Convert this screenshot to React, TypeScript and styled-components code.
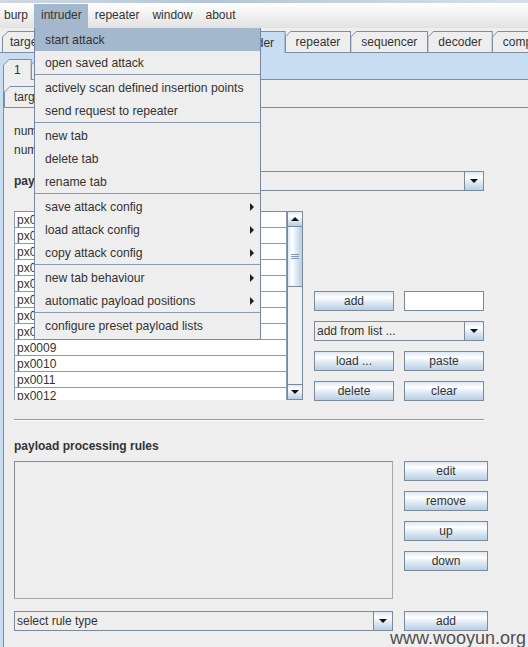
import React from "react";
import styled, { createGlobalStyle } from "styled-components";

const GlobalStyle = createGlobalStyle`
  html, body { margin: 0; padding: 0; background: #eeeeee; overflow: hidden; }
  body {
    font-family: "Liberation Sans", Arial, sans-serif;
    font-size: 12px;
    color: #333333;
  }
  * { box-sizing: border-box; }
`;

const BORDER = "#7d8da3";
const CONTROL = "#7a8a99";
const BLUE = "#c8ddf2";
const HILITE = "#a3b8cc";
const BTN_GRAD = "linear-gradient(to bottom, #dde8f3 0%, #ffffff 30%, #dde8f3 60%, #b8cfe5 100%)";

const Window = styled.div`
  position: relative;
  width: 528px;
  height: 647px;
  overflow: hidden;
  background: #eeeeee;
`;

const TitleStrip = styled.div`
  height: 3px;
  background: linear-gradient(to right, #cfd9e4, #b4c6d8 40%, #d7e0ea);
`;

const MenuBar = styled.div`
  position: relative;
  z-index: 10;
  height: 25px;
  padding-top: 1px;
  display: flex;
  background: linear-gradient(to bottom, #ffffff, #e2e2e2);
`;

const MenuItem = styled.div<{ $active?: boolean; $first?: boolean }>`
  position: relative;
  height: 24px;
  line-height: 23px;
  padding: 0 6px 0 ${(p) => (p.$first ? 4 : 7)}px;
  background: ${(p) => (p.$active ? HILITE : "transparent")};
  white-space: nowrap;
`;

const Dropdown = styled.div`
  position: absolute;
  top: 100%;
  left: 0;
  width: 227px;
  padding-bottom: 2px;
  background: #eeeeee;
  border: 1px solid #7587a2;
  border-top-width: 0;
  line-height: normal;
  font-size: 12.2px;
`;

const DropItem = styled.div<{ $active?: boolean }>`
  height: 23px;
  display: flex;
  align-items: center;
  justify-content: space-between;
  padding: 0 6px 0 10px;
  background: ${(p) => (p.$active ? HILITE : "transparent")};
  white-space: nowrap;
`;

const SubArrow = styled.span`
  width: 0;
  height: 0;
  border-top: 4px solid transparent;
  border-bottom: 4px solid transparent;
  border-left: 4px solid #1e1e1e;
`;

const DropSep = styled.div`
  height: 2px;
  border-top: 1px solid #8a9ab2;
`;

const Gap = styled.div<{ $h: number }>`
  height: ${(p) => p.$h}px;
`;

const TabRow = styled.div<{ $h: number; $pad: number; $bg: string }>`
  display: flex;
  align-items: flex-end;
  height: ${(p) => p.$h}px;
  padding-left: ${(p) => p.$pad}px;
  background: ${(p) => p.$bg};
  border-bottom: 1px solid ${BORDER};
`;

const Tab = styled.div<{ $sel?: boolean; $h: number }>`
  position: relative;
  z-index: ${(p) => (p.$sel ? 2 : 1)};
  flex-shrink: 0;
  height: ${(p) => p.$h + (p.$sel ? 1 : 0)}px;
  margin-bottom: ${(p) => (p.$sel ? -1 : 0)}px;
  margin-left: -1px;
  padding: 1px 1px 0 1px;
  background: ${BORDER};
  clip-path: polygon(6px 0, 100% 0, 100% 100%, 0 100%, 0 6px);
  &:first-child { margin-left: 0; }
`;

const TabFace = styled.div<{ $bg: string; $px: number; $pl?: number }>`
  height: 100%;
  display: flex;
  align-items: center;
  padding: 0 ${(p) => p.$px}px 0 ${(p) => p.$pl ?? p.$px}px;
  background: ${(p) => p.$bg};
  clip-path: polygon(5px 0, 100% 0, 100% 100%, 0 100%, 0 5px);
  white-space: nowrap;
`;

const MainPanel = styled.div`
  background: ${BLUE};
  padding-left: 3px;
  height: 600px;
`;

const SubContent = styled.div`
  background: #eeeeee;
  border-left: 1px solid ${BORDER};
  height: 600px;
`;

const PayloadPanel = styled.div`
  padding: 14px 0 0 10px;
`;

const InfoLine = styled.div`
  height: 19px;
  line-height: 19px;
  white-space: nowrap;
`;

const SetRow = styled.div`
  display: flex;
  align-items: center;
  width: 470px;
  height: 20px;
  margin-top: 11px;
`;

const BoldLabel = styled.div<{ $w?: number }>`
  font-weight: bold;
  white-space: nowrap;
  ${(p) => (p.$w ? `width: ${p.$w}px; flex-shrink: 0;` : "")}
`;

const Combo = styled.div<{ $w?: number }>`
  display: flex;
  height: 20px;
  ${(p) => (p.$w ? `width: ${p.$w}px; flex-shrink: 0;` : "flex: 1;")}
  border: 1px solid ${CONTROL};
  background: #eeeeee;
`;

const ComboText = styled.div`
  flex: 1;
  padding-left: 2px;
  line-height: 18px;
  white-space: nowrap;
  overflow: hidden;
`;

const ComboArrow = styled.div`
  width: 19px;
  border-left: 1px solid ${CONTROL};
  background: ${BTN_GRAD};
  display: flex;
  align-items: center;
  justify-content: center;
`;

const DownTri = styled.span`
  width: 0;
  height: 0;
  border-left: 4px solid transparent;
  border-right: 4px solid transparent;
  border-top: 4px solid #111;
`;

const UpTri = styled.span`
  width: 0;
  height: 0;
  border-left: 4px solid transparent;
  border-right: 4px solid transparent;
  border-bottom: 4px solid #111;
`;

const ListSection = styled.div`
  display: flex;
  align-items: flex-end;
  gap: 11px;
  margin-top: 20px;
`;

const ListBox = styled.div`
  display: flex;
  width: 289px;
  height: 189px;
`;

const Rows = styled.div`
  flex: 1;
  overflow: hidden;
  border-top: 1px solid ${BORDER};
  background: #ffffff;
`;

const Row = styled.div`
  height: 16px;
  line-height: 16px;
  padding-left: 2px;
  background: #ffffff;
  border: 1px solid #8a9ab0;
  border-top: none;
`;

const ScrollBar = styled.div`
  width: 16px;
  display: flex;
  flex-direction: column;
  background: #f2f2f2;
  border: 1px solid ${CONTROL};
`;

const ScrollBtn = styled.div`
  height: 15px;
  flex-shrink: 0;
  display: flex;
  align-items: center;
  justify-content: center;
  background: ${BTN_GRAD};
  border-bottom: 1px solid ${CONTROL};
  &:last-child {
    border-bottom: none;
    border-top: 1px solid ${CONTROL};
  }
`;

const Thumb = styled.div`
  height: 60px;
  flex-shrink: 0;
  display: flex;
  align-items: center;
  justify-content: center;
  background: linear-gradient(to right, #dde8f3 0%, #ffffff 30%, #dde8f3 60%, #b8cfe5 100%);
  border-bottom: 1px solid ${CONTROL};
`;

const Grip = styled.div`
  width: 8px;
  height: 5px;
  background: repeating-linear-gradient(to bottom, #7f98b8 0 1px, transparent 1px 2px);
`;

const Track = styled.div`
  flex: 1;
`;

const ButtonGrid = styled.div`
  display: grid;
  grid-template-columns: 80px 80px;
  grid-auto-rows: 20px;
  gap: 10px;
  margin-bottom: -1px;
`;

const Button = styled.div<{ $w?: number }>`
  height: 20px;
  ${(p) => (p.$w ? `width: ${p.$w}px;` : "")}
  border: 1px solid ${CONTROL};
  background: ${BTN_GRAD};
  text-align: center;
  line-height: 18px;
  white-space: nowrap;
`;

const TextField = styled.div`
  height: 20px;
  border: 1px solid ${CONTROL};
  background: #ffffff;
`;

const WideCell = styled.div`
  grid-column: 1 / span 2;
  display: flex;
`;

const Separator = styled.div`
  width: 470px;
  margin-top: 19px;
  height: 2px;
  border-top: 1px solid #8a9aae;
  background: #ffffff;
`;

const SectionTitle = styled(BoldLabel)`
  margin-top: 17px;
  height: 16px;
  line-height: 16px;
`;

const RulesSection = styled.div`
  display: flex;
  gap: 11px;
  margin-top: 7px;
`;

const RulesBox = styled.div`
  width: 379px;
  height: 138px;
  border: 1px solid #8c8c8c;
  border-right-color: #a8a8a8;
  border-bottom-color: #a8a8a8;
  background: #eeeeee;
`;

const RuleButtons = styled.div`
  display: flex;
  flex-direction: column;
  gap: 10px;
  width: 84px;
`;

const BottomRow = styled.div`
  display: flex;
  gap: 11px;
  margin-top: 12px;
`;

const Watermark = styled.div`
  position: absolute;
  right: 2px;
  bottom: -1px;
  font-family: "Liberation Sans", Arial, sans-serif;
  font-size: 18px;
  line-height: 20px;
  color: #505050;
  z-index: 20;
`;

type MenuEntry = { label: string; sub?: boolean; active?: boolean } | "sep";

const menuEntries: MenuEntry[] = [
  { label: "start attack", active: true },
  { label: "open saved attack" },
  "sep",
  { label: "actively scan defined insertion points" },
  { label: "send request to repeater" },
  "sep",
  { label: "new tab" },
  { label: "delete tab" },
  { label: "rename tab" },
  "sep",
  { label: "save attack config", sub: true },
  { label: "load attack config", sub: true },
  { label: "copy attack config", sub: true },
  "sep",
  { label: "new tab behaviour", sub: true },
  { label: "automatic payload positions", sub: true },
  "sep",
  { label: "configure preset payload lists" },
];

const mainTabs = [
  "target", "proxy", "spider", "scanner", "intruder", "repeater",
  "sequencer", "decoder", "comparer", "options", "alerts",
];
const subTabs = ["1", "2", "..."];
const innerTabs = ["target", "positions", "payloads", "options"];

const payloads = Array.from({ length: 12 }, (_, i) => `px${String(i + 1).padStart(4, "0")}`);

export default function App() {
  return (
    <Window>
      <GlobalStyle />
      <TitleStrip />
      <MenuBar>
        <MenuItem $first>burp</MenuItem>
        <MenuItem $active>
          intruder
          <Dropdown>
            {menuEntries.map((e, i) =>
              e === "sep" ? (
                <DropSep key={i} />
              ) : (
                <DropItem key={i} $active={e.active}>
                  <span>{e.label}</span>
                  {e.sub && <SubArrow />}
                </DropItem>
              )
            )}
          </Dropdown>
        </MenuItem>
        <MenuItem>repeater</MenuItem>
        <MenuItem>window</MenuItem>
        <MenuItem>about</MenuItem>
      </MenuBar>
      <Gap $h={3} />
      <TabRow $h={22} $pad={2} $bg="#eeeeee">
        {mainTabs.map((t, i) => (
          <Tab key={t} $h={21} $sel={t === "intruder"}>
            <TabFace
              $px={i < 5 ? 10.5 : 10}
              $pl={i === 0 ? 7 : undefined}
              $bg={t === "intruder" ? BLUE : "#eeeeee"}
            >
              {t}
            </TabFace>
          </Tab>
        ))}
      </TabRow>
      <MainPanel>
        <TabRow $h={27} $pad={0} $bg={BLUE}>
          {subTabs.map((t) => (
            <Tab key={t} $h={20} $sel={t === "1"}>
              <TabFace $px={10} $bg="#eeeeee">{t}</TabFace>
            </Tab>
          ))}
        </TabRow>
        <SubContent>
          <TabRow $h={28} $pad={0} $bg="#eeeeee">
            {innerTabs.map((t) => (
              <Tab key={t} $h={21} $sel={t === "payloads"}>
                <TabFace $px={9} $bg="#eeeeee">{t}</TabFace>
              </Tab>
            ))}
          </TabRow>
          <PayloadPanel>
            <InfoLine>number of payload positions: 1</InfoLine>
            <InfoLine>number of requests: 12</InfoLine>
            <SetRow>
              <BoldLabel $w={90}>payload set</BoldLabel>
              <Combo>
                <ComboText>1</ComboText>
                <ComboArrow><DownTri /></ComboArrow>
              </Combo>
            </SetRow>
            <ListSection>
              <ListBox>
                <Rows>
                  {payloads.map((p) => (
                    <Row key={p}>{p}</Row>
                  ))}
                </Rows>
                <ScrollBar>
                  <ScrollBtn><UpTri /></ScrollBtn>
                  <Thumb><Grip /></Thumb>
                  <Track />
                  <ScrollBtn><DownTri /></ScrollBtn>
                </ScrollBar>
              </ListBox>
              <ButtonGrid>
                <Button>add</Button>
                <TextField />
                <WideCell>
                  <Combo>
                    <ComboText>add from list ...</ComboText>
                    <ComboArrow><DownTri /></ComboArrow>
                  </Combo>
                </WideCell>
                <Button>load ...</Button>
                <Button>paste</Button>
                <Button>delete</Button>
                <Button>clear</Button>
              </ButtonGrid>
            </ListSection>
            <Separator />
            <SectionTitle>payload processing rules</SectionTitle>
            <RulesSection>
              <RulesBox />
              <RuleButtons>
                <Button>edit</Button>
                <Button>remove</Button>
                <Button>up</Button>
                <Button>down</Button>
              </RuleButtons>
            </RulesSection>
            <BottomRow>
              <Combo $w={379}>
                <ComboText>select rule type</ComboText>
                <ComboArrow><DownTri /></ComboArrow>
              </Combo>
              <Button $w={84}>add</Button>
            </BottomRow>
          </PayloadPanel>
        </SubContent>
      </MainPanel>
      <Watermark>www.wooyun.org</Watermark>
    </Window>
  );
}
